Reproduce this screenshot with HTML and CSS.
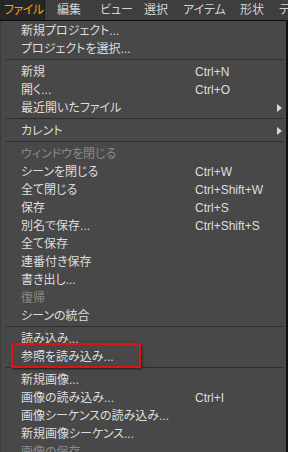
FILE: index.html
```html
<!DOCTYPE html>
<html lang="ja">
<head>
    <meta charset="UTF-8">
    <meta name="viewport" content="width=device-width, initial-scale=1.0">
    <title>ファイル メニュー</title>
    <link rel="stylesheet" href="styles.css">
</head>
<body>

    <!-- メニューバー -->
    <div class="menubar">
        <span class="menubar-item active">ファイル</span>
        <span class="menubar-item">編集</span>
        <span class="menubar-item">ビュー</span>
        <span class="menubar-item">選択</span>
        <span class="menubar-item">アイテム</span>
        <span class="menubar-item">形状</span>
        <span class="menubar-item">テキスト</span>
    </div>

    <!-- ファイル メニュー -->
    <div class="menu">
        <div class="item"><span class="label">新規プロジェクト...</span></div>
        <div class="item"><span class="label">プロジェクトを選択...</span></div>
        <div class="sep"></div>
        <div class="item"><span class="label">新規</span><span class="key">Ctrl+N</span></div>
        <div class="item"><span class="label">開く...</span><span class="key">Ctrl+O</span></div>
        <div class="item"><span class="label">最近開いたファイル</span><span class="arrow"></span></div>
        <div class="sep"></div>
        <div class="item"><span class="label">カレント</span><span class="arrow"></span></div>
        <div class="sep"></div>
        <div class="item disabled"><span class="label">ウィンドウを閉じる</span></div>
        <div class="item"><span class="label">シーンを閉じる</span><span class="key">Ctrl+W</span></div>
        <div class="item"><span class="label">全て閉じる</span><span class="key">Ctrl+Shift+W</span></div>
        <div class="item"><span class="label">保存</span><span class="key">Ctrl+S</span></div>
        <div class="item"><span class="label">別名で保存...</span><span class="key">Ctrl+Shift+S</span></div>
        <div class="item"><span class="label">全て保存</span></div>
        <div class="item"><span class="label">連番付き保存</span></div>
        <div class="item"><span class="label">書き出し...</span></div>
        <div class="item disabled"><span class="label">復帰</span></div>
        <div class="item"><span class="label">シーンの統合</span></div>
        <div class="sep"></div>
        <div class="item"><span class="label">読み込み...</span></div>
        <div class="item highlight"><span class="label">参照を読み込み...</span></div>
        <div class="sep"></div>
        <div class="item"><span class="label">新規画像...</span></div>
        <div class="item"><span class="label">画像の読み込み...</span><span class="key">Ctrl+I</span></div>
        <div class="item"><span class="label">画像シーケンスの読み込み...</span></div>
        <div class="item"><span class="label">新規画像シーケンス...</span></div>
        <div class="item disabled"><span class="label">画像の保存</span></div>
    </div>

</body>
</html>
```

FILE: styles.css
```css
body {
    margin: 0;
    padding: 0;
    width: 288px;
    height: 452px;
    overflow: hidden;
    background-color: #111;
    font-family: "Liberation Sans", "Noto Sans CJK JP", sans-serif;
    font-size: 12px;
    font-feature-settings: "palt";
    color: #dedede;
}

.menubar {
    display: grid;
    grid-template-columns: 57px 43px 44px 39px 57px 39px 1fr;
    height: 20px;
    line-height: 20px;
    background-color: #3e3e3e;
    border-bottom: 1px solid #0e0e0e;
    white-space: nowrap;
    overflow: hidden;
    color: #d4d4d4;
}

.menubar-item.active {
    width: 45px;
    box-sizing: border-box;
    padding-left: 4px;
    letter-spacing: -0.5px;
    background-color: #262626;
    border-right: 1px solid #1a1a1a;
    color: #f4a20c;
}

.menu {
    width: 286px;
    height: 431px;
    padding-top: 1px;
    background-color: #484848;
    border-left: 1px solid #3c3c3c;
    box-sizing: border-box;
}

.item {
    position: relative;
    display: flex;
    align-items: center;
    height: 18px;
    line-height: 18px;
    padding-left: 20px;
    white-space: nowrap;
}

.item .label {
    flex: 0 0 174px;
}

.item .key {
    flex: none;
}

.item.disabled {
    color: #8a8a8a;
}

.arrow {
    margin-left: auto;
    margin-right: 4px;
    width: 0;
    height: 0;
    border-top: 4px solid transparent;
    border-bottom: 4px solid transparent;
    border-left: 5px solid #d8d8d8;
}

.sep {
    height: 1px;
    margin: 1px 3px 3px 5px;
    background-color: #2c2c2c;
}

.highlight::after {
    content: "";
    position: absolute;
    left: 10px;
    top: -5px;
    width: 126px;
    height: 21px;
    border: 2px solid #e01212;
    box-shadow: 1px 1px 2px rgba(0, 0, 0, 0.6);
}
```
